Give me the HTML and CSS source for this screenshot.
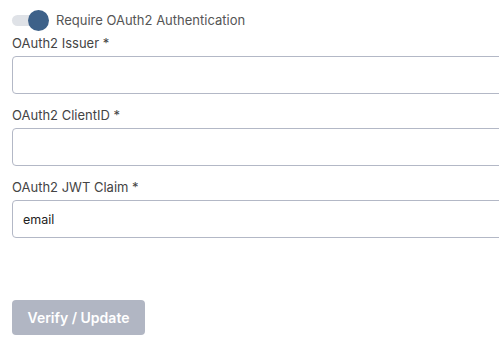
FILE: index.html
```html
<!DOCTYPE html>
<html lang="en">
<head>
    <meta charset="UTF-8">
    <meta name="viewport" content="width=device-width, initial-scale=1.0">
    <title>OAuth2 Settings</title>
    <link rel="stylesheet" href="styles.css">
</head>
<body>
<form class="oauth-form">
    <label class="switch-row">
        <span class="switch on"><span class="knob"></span></span>
        <span class="switch-label">Require OAuth2 Authentication</span>
    </label>

    <div class="field">
        <label for="issuer">OAuth2 Issuer *</label>
        <input id="issuer" type="text">
    </div>

    <div class="field">
        <label for="clientId">OAuth2 ClientID *</label>
        <input id="clientId" type="text">
    </div>

    <div class="field">
        <label for="claim">OAuth2 JWT Claim *</label>
        <input id="claim" type="text" value="email">
    </div>

    <button type="button" class="btn" disabled>Verify / Update</button>
</form>
</body>
</html>
```

FILE: styles.css
```css
body {
    margin: 0;
    font-family: Inter, "Noto Sans", sans-serif;
    background: #fff;
    overflow: hidden;
}

.oauth-form {
    width: 560px;
    padding: 8px 12px;
}

/* Toggle */
.switch-row {
    display: flex;
    align-items: center;
    gap: 8px;
    height: 24px;
    margin-bottom: 3px;
}

.switch {
    position: relative;
    width: 36px;
    height: 11px;
    border-radius: 6px;
    background: #dfe2e7;
}

.switch .knob {
    position: absolute;
    top: -5px;
    right: -1px;
    width: 21px;
    height: 21px;
    border-radius: 50%;
    background: #3d6189;
}

.switch-label {
    font-size: 13px;
    color: #555;
}

/* Fields */
.field {
    display: flex;
    flex-direction: column;
    gap: 5px;
    margin-bottom: 13px;
}

.field label {
    font-size: 13px;
    line-height: 16px;
    color: #444;
}

.field input {
    height: 38px;
    box-sizing: border-box;
    border: 1px solid #b3b8c6;
    border-radius: 4px;
    padding: 0 10px;
    font-family: inherit;
    font-size: 12.5px;
    color: #222;
    outline: none;
}

/* Button */
.btn {
    display: block;
    margin-top: 62px;
    width: 133px;
    height: 35px;
    border: none;
    border-radius: 4px;
    background: #b1b6c3;
    color: #fff;
    font-family: inherit;
    font-size: 14px;
    font-weight: 600;
}
```
